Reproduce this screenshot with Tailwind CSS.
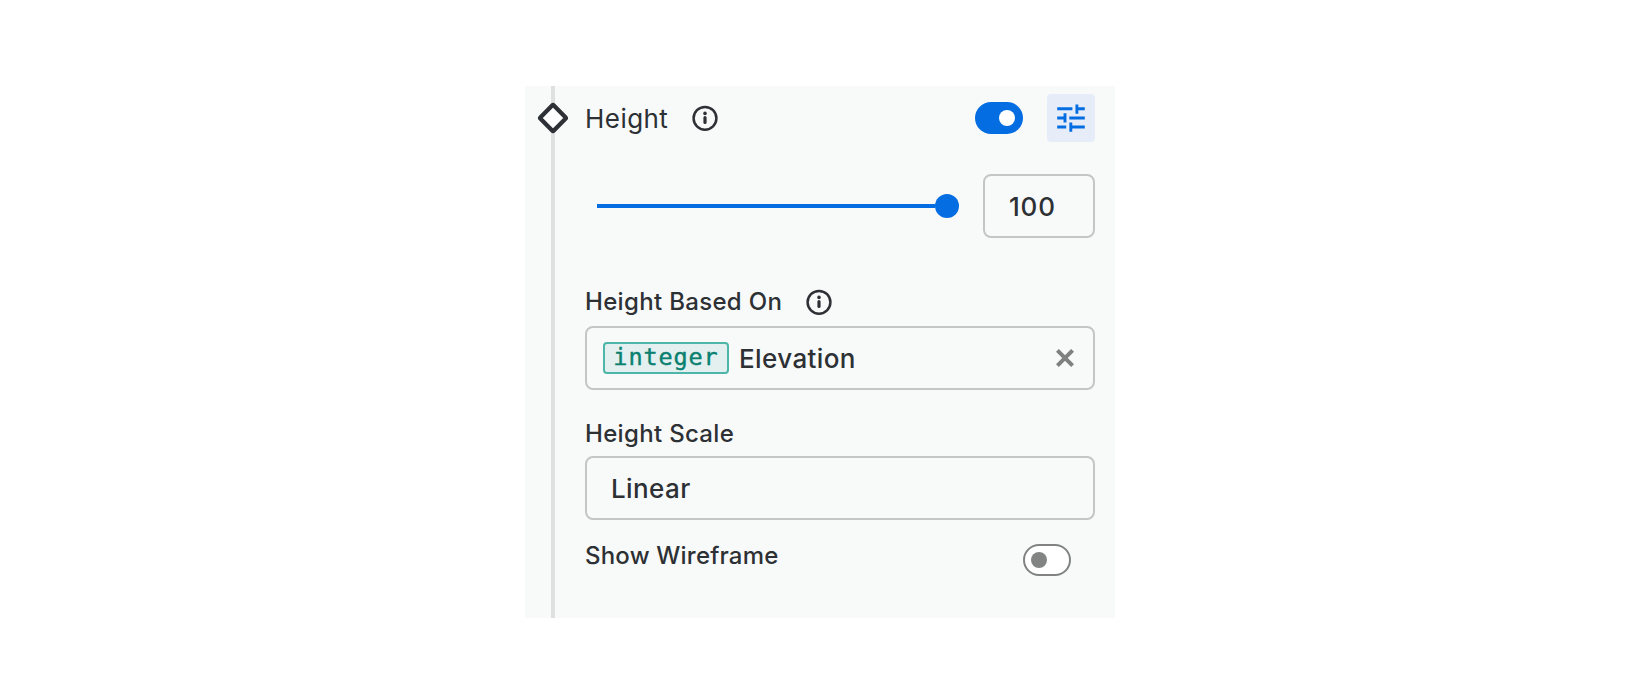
<!DOCTYPE html>
<html lang="en">
<head>
<meta charset="utf-8">
<title>Height settings</title>
<script src="https://cdn.jsdelivr.net/npm/@tailwindcss/browser@4"></script>
</head>
<body class="flex h-[700px] justify-center bg-white pt-[86px] font-['Inter',sans-serif] text-[#2d3034]">
<section class="relative flex h-[532px] w-[590px] flex-col bg-[#f8faf9] pt-2 pr-5 pl-[60px]">
  <div class="absolute inset-y-0 left-[26px] w-1 bg-[#dfe1e0]"></div>
  <svg class="absolute top-4 left-3" width="32" height="32" viewBox="0 0 32 32"><rect x="6.6" y="6.6" width="18.8" height="18.8" rx="1.2" transform="rotate(45 16 16)" fill="#fff" stroke="#2d3034" stroke-width="4.3"/></svg>

  <div class="flex h-12 items-center">
    <span class="pt-0.5 text-[26px] leading-8 tracking-[0.45px]">Height</span>
    <svg class="absolute left-[167px]" width="26" height="26" viewBox="0 0 26 26" fill="none" stroke="#2d3034"><circle cx="13" cy="13.3" r="11.4" stroke-width="2.5"/><path d="M13 12.7V17.5" stroke-width="3.2" stroke-linecap="round"/><circle cx="13" cy="8.4" r="1.8" fill="#2d3034" stroke="none"/></svg>
    <div class="ml-auto flex h-8 w-12 items-center justify-end rounded-full bg-[#046de2] pr-2"><div class="size-4 rounded-full bg-white"></div></div>
    <div class="ml-6 flex size-12 items-center justify-center rounded bg-[#e6edf8]">
      <svg width="28" height="28" viewBox="0 0 28 28" fill="none" stroke="#046de2" stroke-width="2.9"><path d="M.2 4.8H15.4M19.9 .4V9.8M19.9 4.8H27.8M.2 14H8M8 9.3V18.6M12.3 14H27.8M.2 23H9.2M13.8 18.4V27.8M13.8 23H27.8"/></svg>
    </div>
  </div>

  <div class="mt-8 flex h-16 items-center">
    <div class="ml-3 flex w-[362px] items-center"><div class="h-1 flex-1 bg-[#046de2]"></div><div class="size-6 rounded-full bg-[#046de2]"></div></div>
    <div class="ml-auto flex h-16 w-28 items-center rounded-lg border-2 border-[#c4c6c5] pl-6 text-[26px] font-medium tracking-[0.8px]">100</div>
  </div>

  <div class="mt-12 flex h-8 items-center">
    <span class="text-2xl font-medium tracking-[0.32px]">Height Based On</span>
    <svg class="ml-6" width="26" height="26" viewBox="0 0 26 26" fill="none" stroke="#2d3034"><circle cx="13" cy="13.3" r="11.4" stroke-width="2.5"/><path d="M13 12.7V17.5" stroke-width="3.2" stroke-linecap="round"/><circle cx="13" cy="8.4" r="1.8" fill="#2d3034" stroke="none"/></svg>
  </div>
  <div class="mt-2 flex h-16 items-center rounded-lg border-2 border-[#c4c6c5] pl-4">
    <div class="flex h-8 w-[126px] justify-center rounded border-2 border-[#4db6a8] bg-[#e3f0ef] font-['DejaVu_Sans_Mono',monospace] text-[23.5px] leading-[26px] tracking-[0.9px] text-[#0a8070] [-webkit-text-stroke:0.4px_#0a8070]">integer</div>
    <span class="ml-2.5 text-[26px] font-medium tracking-[0.4px]">Elevation</span>
    <svg class="mr-[19px] ml-auto" width="18" height="18" viewBox="0 0 18 18" fill="none" stroke="#7e8180" stroke-width="4"><path d="M1.4 1.4L16.6 16.6M16.6 1.4L1.4 16.6"/></svg>
  </div>

  <div class="mt-7 flex h-8 items-center text-2xl font-medium tracking-[0.32px]">Height Scale</div>
  <div class="mt-1.5 flex h-16 items-center rounded-lg border-2 border-[#c4c6c5] pl-6 text-[26px] font-medium tracking-[0.4px]">Linear</div>

  <div class="mt-5 flex justify-between pr-6">
    <span class="text-2xl leading-8 font-medium tracking-[0.2px]">Show Wireframe</span>
    <div class="mt-1 flex h-8 w-12 items-center rounded-full border-2 border-[#808382] bg-white pl-1.5"><div class="size-4 rounded-full bg-[#828484]"></div></div>
  </div>
</section>
</body>
</html>
